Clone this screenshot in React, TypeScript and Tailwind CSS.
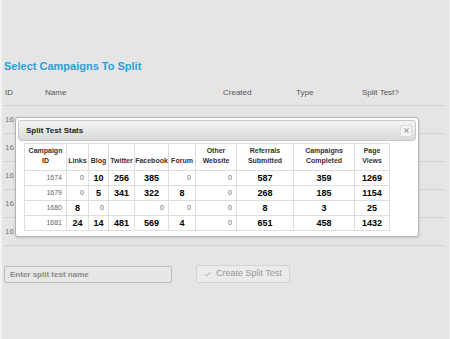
import { Check, X } from "lucide-react";

type Cell = { v: string; big?: boolean };

const cols = [
  { label: ["Campaign", "ID"], w: 42 },
  { label: ["Links"], w: 22 },
  { label: ["Blog"], w: 20 },
  { label: ["Twitter"], w: 26 },
  { label: ["Facebook"], w: 34 },
  { label: ["Forum"], w: 27 },
  { label: ["Other", "Website"], w: 41 },
  { label: ["Referrals", "Submitted"], w: 57 },
  { label: ["Campaigns", "Completed"], w: 61 },
  { label: ["Page", "Views"], w: 35 },
];

const s = (v: string): Cell => ({ v });
const b = (v: string): Cell => ({ v, big: true });

const stats: Cell[][] = [
  [s("1674"), s("0"), b("10"), b("256"), b("385"), s("0"), s("0"), b("587"), b("359"), b("1269")],
  [s("1679"), s("0"), b("5"), b("341"), b("322"), b("8"), s("0"), b("268"), b("185"), b("1154")],
  [s("1680"), b("8"), s("0"), s(""), s("0"), s("0"), s("0"), b("8"), b("3"), b("25")],
  [s("1681"), b("24"), b("14"), b("481"), b("569"), b("4"), s("0"), b("651"), b("458"), b("1432")],
];

// only the first two digits show beside the dialog
const rows = ["a", "b", "c", "d", "e"];

function StatsDialog() {
  return (
    <div className="absolute left-[13px] top-[117px] w-[404px] h-[120px] bg-white border border-[#b5b5b5] rounded-[3px] p-[2px] shadow-[0_1px_3px_rgba(0,0,0,0.15)]">
      <div className="h-[21px] flex items-center justify-between pl-[7px] pr-[3px] rounded-[3px] border border-[#c9c9c9] bg-gradient-to-b from-[#f4f4f4] to-[#d9d9d9]">
        <span className="text-[8px] font-bold text-[#222]">Split Test Stats</span>
        <span className="w-[12px] h-[12px] flex items-center justify-center rounded-[2px] border border-[#dcdcdc] bg-[#f3f3f3]">
          <X size={7} strokeWidth={3.5} className="text-[#8a8a8a]" />
        </span>
      </div>
      <table className="ml-[6px] mt-[2px] border-collapse table-fixed w-[365px]">
        <colgroup>
          {cols.map((c, i) => (
            <col key={i} style={{ width: c.w }} />
          ))}
        </colgroup>
        <thead>
          <tr className="h-[27px]">
            {cols.map((c, i) => (
              <th
                key={i}
                className="border border-[#dedede] align-bottom pb-[4px] px-0 text-center text-[7px] leading-[10px] font-bold text-[#333] whitespace-nowrap"
              >
                {c.label.map((l, j) => (
                  <div key={j}>{l}</div>
                ))}
              </th>
            ))}
          </tr>
        </thead>
        <tbody>
          {stats.map((row, r) => (
            <tr key={r} className="h-[15px]">
              {row.map((c, i) => (
                <td
                  key={i}
                  className={
                    c.big
                      ? "border border-[#dedede] text-center text-[9px] leading-[14px] font-bold text-black px-0"
                      : "border border-[#dedede] text-right text-[7px] leading-[14px] text-[#666] pr-[4px]"
                  }
                >
                  {c.v}
                </td>
              ))}
            </tr>
          ))}
        </tbody>
      </table>
    </div>
  );
}

export default function App() {
  return (
    <div
      className="w-[450px] h-[339px] bg-[#f3f3f3] pl-[2px] pr-[1px]"
      style={{ fontFamily: '"Liberation Sans", Arial, sans-serif' }}
    >
      <div className="relative h-full bg-[#e5e5e5] pt-[59px]">
        <h2 className="pl-[2px] text-[11px] leading-[14px] font-bold text-[#2b9fd8]">
          Select Campaigns To Split
        </h2>

        <div className="ml-[2px] w-[441px] mt-[7px]">
          <div className="grid grid-cols-[40px_178px_73px_66px_1fr] h-[26px] items-center pl-[1px] border-b border-[#d2d2d2] text-[8px] text-[#555]">
            <span>ID</span>
            <span>Name</span>
            <span>Created</span>
            <span>Type</span>
            <span>Split Test?</span>
          </div>
          {rows.map((k) => (
            <div
              key={k}
              className="h-[28px] flex items-center pl-[1px] border-b border-[#d2d2d2] text-[8px] text-[#777]"
            >
              16
            </div>
          ))}
        </div>

        <div className="flex items-center mt-[19px] ml-[2px] gap-[24px]">
          <input
            placeholder="Enter split test name"
            className="w-[168px] h-[17px] rounded-[2px] border border-[#bdbdbd] bg-[#e7e7e7] px-[5px] text-[8px] font-bold text-[#555] placeholder:text-[#8a8a8a] outline-none"
          />
          <button className="flex items-center gap-[5px] h-[18px] px-[7px] rounded-[2px] border border-[#d3d3d3] bg-[#ebebeb] text-[9px] text-[#9a9a9a]">
            <Check size={7} strokeWidth={3} />
            Create Split Test
          </button>
        </div>

        <StatsDialog />
      </div>
    </div>
  );
}
